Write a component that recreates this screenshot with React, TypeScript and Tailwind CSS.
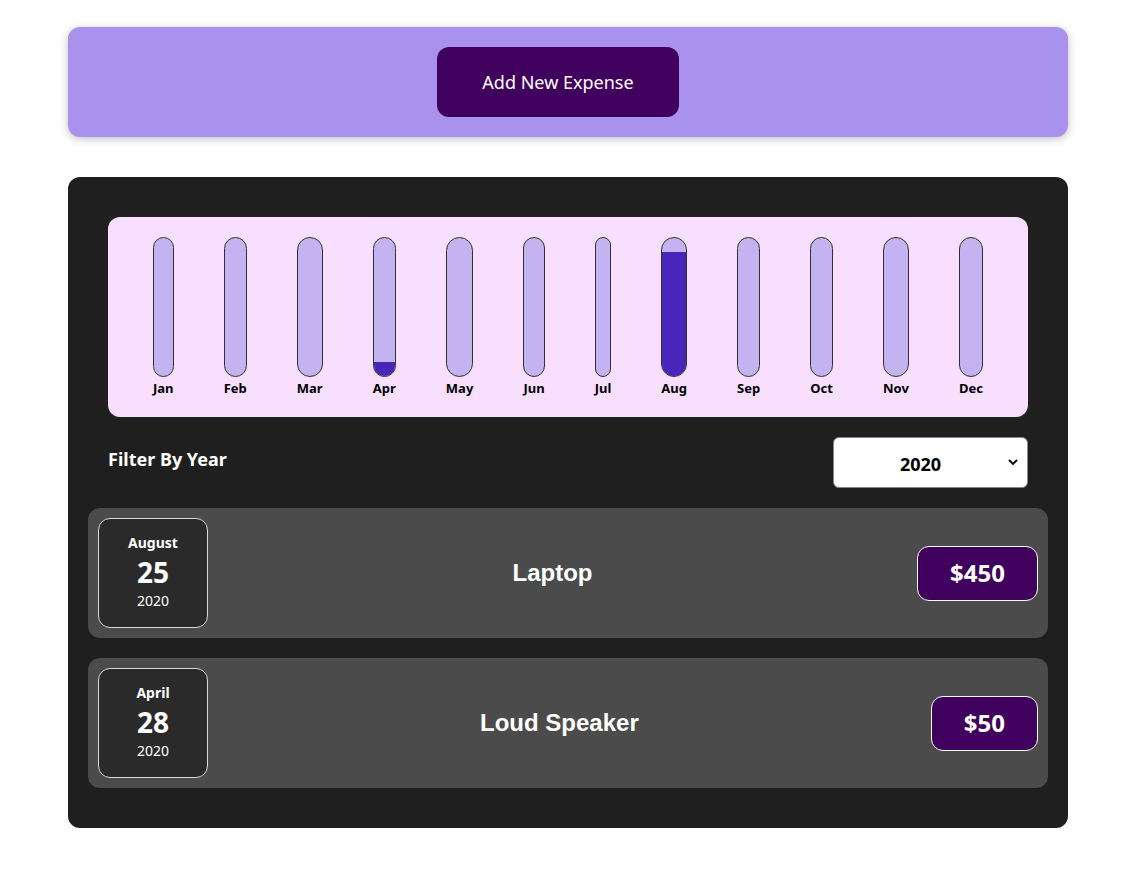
import React from 'react'

const months = ['Jan', 'Feb', 'Mar', 'Apr', 'May', 'Jun', 'Jul', 'Aug', 'Sep', 'Oct', 'Nov', 'Dec']

const expenses = [
  { id: 'e1', title: 'Laptop', amount: 450, month: 'August', day: '25', year: '2020' },
  { id: 'e2', title: 'Loud Speaker', amount: 50, month: 'April', day: '28', year: '2020' },
]

const values: Record<string, number> = { Apr: 50, Aug: 450 }
const maxValue = 500

const ChartBar = ({ label, value }: { label: string; value: number }) => {
  const fill = Math.round((value / maxValue) * 100)
  return (
    <div className="flex flex-col items-center">
      <div className="w-full h-[140px] rounded-full border border-[#313131] bg-[#c3b4f1] overflow-hidden flex flex-col justify-end">
        <div className="bg-[#4826b9] w-full" style={{ height: `${fill}%` }} />
      </div>
      <span className="mt-[2px] text-[13px] font-bold text-black leading-[18px]">{label}</span>
    </div>
  )
}

const ExpenseDate = ({ month, day, year }: any) => (
  <div className="w-[110px] h-[110px] shrink-0 flex flex-col items-center justify-center rounded-xl border border-[#d8d8d8] bg-[#2a2a2a] text-white">
    <div className="text-[14px] font-bold leading-[18px] -mt-[2px]">{month}</div>
    <div className="text-[28px] font-bold leading-[40px]">{day}</div>
    <div className="text-[14px] leading-[18px]">{year}</div>
  </div>
)

const ExpenseItem = ({ expense }: any) => (
  <div className="flex items-center p-[10px] h-[130px] rounded-xl bg-[#4b4b4b]">
    <ExpenseDate month={expense.month} day={expense.day} year={expense.year} />
    <h2 className="flex-1 pr-5 text-center text-[24px] font-bold text-white font-['Liberation_Sans',Arial,sans-serif]">
      {expense.title}
    </h2>
    <div className="px-8 h-[55px] flex items-center rounded-xl border border-white bg-[#40005d] text-[24px] font-bold text-white">
      ${expense.amount}
    </div>
  </div>
)

export default function App() {
  return (
    <div className="min-h-screen bg-white pt-[27px] font-['Noto_Sans',sans-serif]">
      <div className="ml-[68px] w-[1000px] h-[110px] rounded-xl bg-[#a892ee] shadow-[0_2px_8px_rgba(0,0,0,0.25)] flex justify-center pt-5 pr-5">
        <button className="w-[242px] h-[70px] rounded-xl bg-[#40005d] text-white text-[18px]">
          Add New Expense
        </button>
      </div>

      <div className="ml-[68px] mt-10 w-[1000px] rounded-xl bg-[#1f1f1f] px-5 pt-5 pb-10">
        <div className="mx-5 mt-5 h-[200px] rounded-xl bg-[#f8dfff] p-5 flex justify-around">
          {months.map((m) => (
            <ChartBar key={m} label={m} value={values[m] || 0} />
          ))}
        </div>

        <div className="mx-5 mt-5 flex items-center justify-between">
          <label className="text-[18px] font-bold text-white -mt-[6px]">Filter By Year</label>
          <div className="relative w-[195px] h-[51px]">
            <select
              defaultValue="2020"
              className="w-full h-full appearance-none rounded-md border border-[#888] bg-white pr-5 pt-[3px] text-center text-[18px] font-bold text-black"
            >
              <option value="2022">2022</option>
              <option value="2021">2021</option>
              <option value="2020">2020</option>
              <option value="2019">2019</option>
            </select>
            <svg
              className="pointer-events-none absolute right-[10px] top-[22px]"
              width="10"
              height="7"
              viewBox="0 0 10 7"
              fill="none"
              stroke="black"
              strokeWidth="1.8"
            >
              <path d="M1 1l4 4 4-4" />
            </svg>
          </div>
        </div>

        <div className="mt-5 flex flex-col gap-5">
          {expenses.map((e) => (
            <ExpenseItem key={e.id} expense={e} />
          ))}
        </div>
      </div>
    </div>
  )
}
